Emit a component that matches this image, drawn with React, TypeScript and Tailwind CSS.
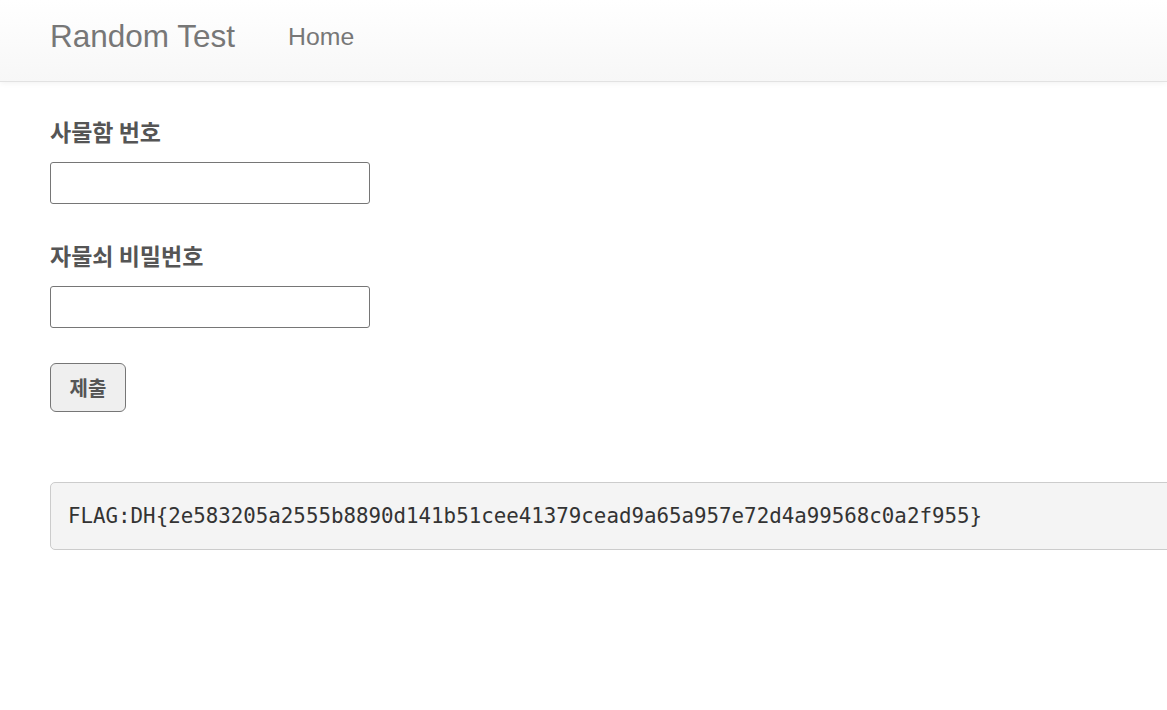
import { useState } from "react";

const FLAG =
  "FLAG:DH{2e583205a2555b8890d141b51cee41379cead9a65a957e72d4a99568c0a2f955}";

export default function App() {
  const [locker, setLocker] = useState("");
  const [password, setPassword] = useState("");

  return (
    <div className="min-h-screen overflow-hidden bg-white font-['Liberation_Sans','Noto_Sans_CJK_KR',sans-serif]">
      <nav className="h-[82px] border-b border-[#e2e2e2] bg-gradient-to-b from-white to-[#f7f7f7] shadow-[0_1px_6px_rgba(0,0,0,0.06)]">
        <div className="flex h-[74px] items-center pl-[50px]">
          <a href="#" className="text-[31.5px] leading-none text-[#777]">
            Random Test
          </a>
          <a href="#" className="ml-[53px] text-[24.8px] leading-none text-[#777]">
            Home
          </a>
        </div>
      </nav>

      <main className="pl-[50px] pt-[35px]">
        <form onSubmit={(e) => e.preventDefault()}>
          <label className="block text-[23px] font-bold leading-[28px] text-[#555] font-['Noto_Sans_CJK_KR',sans-serif]">
            사물함 번호
          </label>
          <input
            value={locker}
            onChange={(e) => setLocker(e.target.value)}
            className="mt-[17px] block h-[42px] w-[320px] rounded-[3px] border border-[#767676] bg-white px-2 outline-none"
          />

          <label className="mt-[37px] block text-[23px] font-bold leading-[28px] text-[#555] font-['Noto_Sans_CJK_KR',sans-serif]">
            자물쇠 비밀번호
          </label>
          <input
            type="password"
            value={password}
            onChange={(e) => setPassword(e.target.value)}
            className="mt-[17px] block h-[42px] w-[320px] rounded-[3px] border border-[#767676] bg-white px-2 outline-none"
          />

          <button
            type="submit"
            className="mt-[35px] flex h-[49px] w-[76px] items-center justify-center rounded-[6px] border border-[#767676] bg-[#efefef] text-[20px] font-bold text-[#555] font-['Noto_Sans_CJK_KR',sans-serif]"
          >
            제출
          </button>
        </form>

        <pre className="mt-[70px] -mr-[40px] h-[68px] rounded-[5px] border border-[#ccc] bg-[#f4f4f4] pl-[17px] pt-[18px] text-[20.8px] leading-[30px] text-[#333] font-['DejaVu_Sans_Mono',monospace]">
          {FLAG}
        </pre>
      </main>
    </div>
  );
}
